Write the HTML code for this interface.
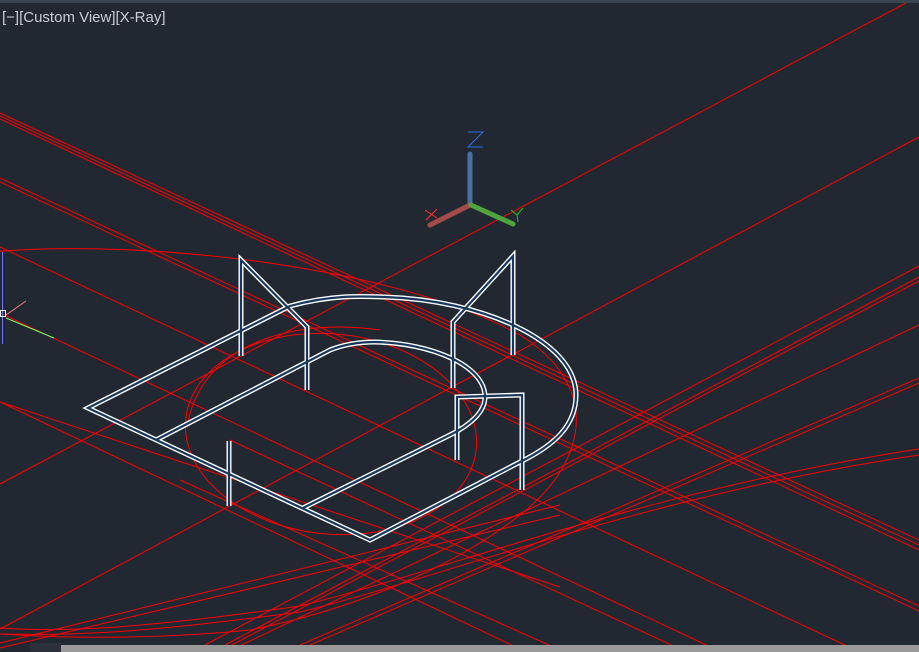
<!DOCTYPE html>
<html><head><meta charset="utf-8">
<style>
html,body{margin:0;padding:0;background:#222831;width:919px;height:652px;overflow:hidden;}
#v{position:relative;width:919px;height:652px;overflow:hidden;background:#222831;}
#top{position:absolute;left:0;top:0;width:919px;height:3px;background:#3a4350;}
#lbl{position:absolute;left:2px;top:9px;font:15px "Liberation Sans",sans-serif;color:#c9cdd2;white-space:nowrap;letter-spacing:0;}
#bar{position:absolute;left:61px;top:645px;width:858px;height:7px;background:#9a9a9a;}
#tab{position:absolute;left:30px;top:643px;width:31px;height:9px;background:#2b303a;}
</style></head><body><div id="v">
<svg width="919" height="652" style="position:absolute;left:0;top:0">
<g stroke="#ff0000" stroke-width="1" fill="none">
<line x1="0" y1="113" x2="919" y2="540"/>
<line x1="0" y1="116" x2="919" y2="545"/>
<line x1="0" y1="119" x2="919" y2="550"/>
<line x1="0" y1="178" x2="919" y2="606"/>
<line x1="0" y1="182" x2="919" y2="611"/>
<line x1="0" y1="247" x2="919" y2="680"/>
<line x1="0" y1="313" x2="919" y2="745"/>
<line x1="0" y1="402" x2="560" y2="587"/>
<line x1="0" y1="402" x2="560" y2="668"/>
<line x1="230" y1="440" x2="919" y2="760"/>
<line x1="180" y1="480" x2="560" y2="650"/>
<line x1="0" y1="484" x2="906" y2="3"/>
<line x1="0" y1="629" x2="919" y2="137"/>
<line x1="205" y1="645" x2="919" y2="266"/>
<line x1="225" y1="645" x2="919" y2="277"/>
<line x1="232" y1="645" x2="919" y2="281"/>
<line x1="235" y1="648" x2="919" y2="325"/>
<line x1="300" y1="645" x2="919" y2="378"/>
<line x1="310" y1="645" x2="919" y2="383"/>
<line x1="0" y1="648" x2="560" y2="515"/>
<line x1="0" y1="643" x2="560" y2="505"/>
<path d="M-10,252 C150,238 400,268 520,335 C600,385 590,460 520,515 C450,570 350,610 250,630 C150,640 60,638 0,634"/>
<path d="M0,628 C60,632 130,630 300,606 C450,569 650,490 919,449"/>
<path d="M0,634 C80,636 150,632 300,612 C450,575 650,495 919,455"/>
<ellipse cx="331" cy="434" rx="146" ry="100" transform="rotate(6 331 434)"/>
<path d="M187,428 C200,340 300,318 380,330"/>
</g>
<g fill="none" stroke-linejoin="miter">
<g stroke="#ffffff" stroke-width="5">
<path d="M88,408 L290,306 C330,295 360,296 385,297 C480,300 576,340 576,395 C576,425 555,445 520,462 L370,540 Z"/>
<path d="M156,440 L330,350 C345,344 360,342 375,342 C430,343 485,365 485,397 C485,412 470,425 450,435 L303,508"/>
<path d="M241,356 L241,260 L307,327 L307,390"/>
<path d="M229,441 L229,506"/>
<path d="M453,388 L453,322 L513,256 L513,355"/>
<path d="M457,460 L457,397 L522,395 L522,490"/>
</g>
<g stroke="#17375e" stroke-width="2.2">
<path d="M88,408 L290,306 C330,295 360,296 385,297 C480,300 576,340 576,395 C576,425 555,445 520,462 L370,540 Z"/>
<path d="M156,440 L330,350 C345,344 360,342 375,342 C430,343 485,365 485,397 C485,412 470,425 450,435 L303,508"/>
<path d="M241,356 L241,260 L307,327 L307,390"/>
<path d="M229,441 L229,506"/>
<path d="M453,388 L453,322 L513,256 L513,355"/>
<path d="M457,460 L457,397 L522,395 L522,490"/>
</g>
</g>
<g stroke-linecap="round">
<line x1="470" y1="154" x2="470" y2="204" stroke="#4a6fa8" stroke-width="5"/>
<line x1="470" y1="205" x2="430" y2="225" stroke="#a34a4a" stroke-width="5"/>
<line x1="471" y1="205" x2="513" y2="224" stroke="#4fa43e" stroke-width="5"/>
</g>
<path d="M468,132 L483,132 L468,147 L483,147" stroke="#2f6fe0" stroke-width="1" fill="none"/>
<path d="M425,210 L437,218 M437,209 L426,220" stroke="#ff3030" stroke-width="1"/>
<path d="M511,210 L517,215 L523,208 M517,215 L518,222" stroke="#20c020" stroke-width="1" fill="none"/>
<line x1="2.5" y1="252" x2="2.5" y2="344" stroke="#7a7aff" stroke-width="1"/>
<rect x="0.5" y="310.5" width="5" height="6" fill="none" stroke="#ffffff" stroke-width="1"/>
<line x1="6" y1="315" x2="26" y2="301" stroke="#ff7a7a" stroke-width="1"/>
<line x1="6" y1="318" x2="54" y2="338" stroke="#70ff70" stroke-width="1"/>
</svg>
<div id="top"></div>
<div id="lbl">[−][Custom View][X-Ray]</div>
<div id="tab"><svg width="31" height="9"><g fill="#9a9a9a"><rect x="5" y="5" width="2" height="4"/><rect x="9" y="5" width="2" height="4"/><rect x="13" y="5" width="2" height="4"/><rect x="17" y="5" width="2" height="4"/><rect x="21" y="5" width="2" height="4"/></g></svg></div>
<div id="bar"></div>
</div></body></html>
